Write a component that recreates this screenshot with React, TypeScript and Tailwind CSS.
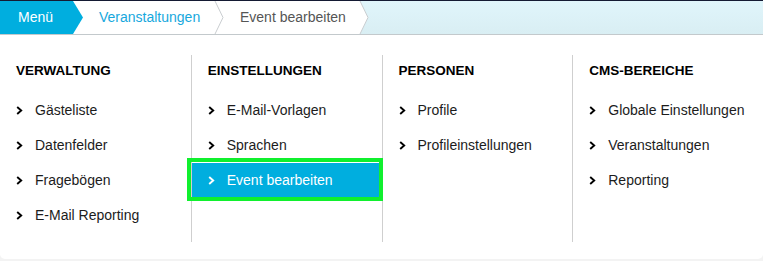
const columns = [
  { title: "Verwaltung", items: ["Gästeliste", "Datenfelder", "Fragebögen", "E-Mail Reporting"] },
  { title: "Einstellungen", items: ["E-Mail-Vorlagen", "Sprachen", "Event bearbeiten"] },
  { title: "Personen", items: ["Profile", "Profileinstellungen"] },
  { title: "CMS-Bereiche", items: ["Globale Einstellungen", "Veranstaltungen", "Reporting"] },
];

const ACTIVE = "Event bearbeiten";

function Chevron({ className }: { className?: string }) {
  return (
    <svg width="7" height="9" viewBox="0 0 7 9" className={className}>
      <polyline points="1.2,1 5.2,4.5 1.2,8" fill="none" stroke="currentColor" strokeWidth="1.9" />
    </svg>
  );
}

function Separator({ fill }: { fill?: boolean }) {
  return (
    <svg width="10" height="33" viewBox="0 0 10 33" className="shrink-0">
      {fill && <polygon points="0,0 1,0 9,16.5 1,33 0,33" fill="#ffffff" />}
      <polyline points="1,0 9,16.5 1,33" fill="none" stroke="#c9cdd0" strokeWidth="1" />
    </svg>
  );
}

export default function App() {
  return (
    <div className="h-[261px] w-[763px] bg-[#f3f3f3] font-['Liberation_Sans',Arial,sans-serif]">
      <div className="rounded-b-[5px] bg-white pb-[17px]">
        <div className="flex h-[35px] border-t border-b border-t-[#141a33] border-b-[#c3c9cc] bg-gradient-to-b from-[#e0f5fb] to-[#d9eef3] text-[14px]">
          <div className="w-[83px] shrink-0 bg-white">
            <div className="flex h-full items-center bg-[#00aedf] pl-[18px] text-white [clip-path:polygon(0_0,73px_0,83px_50%,73px_100%,0_100%)]">
              Menü
            </div>
          </div>
          <div className="flex w-[131px] shrink-0 items-center bg-white pl-[16px] text-[#17a8dd]">
            Veranstaltungen
          </div>
          <div className="flex bg-white">
            <Separator />
          </div>
          <div className="flex w-[135px] shrink-0 items-center bg-white pl-[16px] text-[#555]">
            Event bearbeiten
          </div>
          <Separator fill />
        </div>

        <div className="grid grid-cols-4 pt-[20px]">
          {columns.map((col, i) => (
            <div key={col.title} className={`pt-[8px] pb-[9px] ${i > 0 ? "border-l border-[#cfcfcf]" : ""}`}>
              <h3 className="px-[16px] text-[13.5px] leading-[16px] font-bold uppercase text-black">{col.title}</h3>
              <ul className="mt-[14px]">
                {col.items.map((item) => {
                  const active = item === ACTIVE;
                  return (
                    <li
                      key={item}
                      className={`relative flex h-[35px] items-center gap-[12px] pl-[16px] text-[14px] ${
                        active ? "bg-[#00aedf] text-white" : "text-[#1c1c1c]"
                      }`}
                    >
                      <Chevron className={active ? "text-white" : "text-black"} />
                      <span>{item}</span>
                      {active && (
                        <div className="absolute -left-[5px] -right-[1px] -top-[5px] -bottom-[3px] border-[4px] border-[#10f02e]" />
                      )}
                    </li>
                  );
                })}
              </ul>
            </div>
          ))}
        </div>
      </div>
    </div>
  );
}
